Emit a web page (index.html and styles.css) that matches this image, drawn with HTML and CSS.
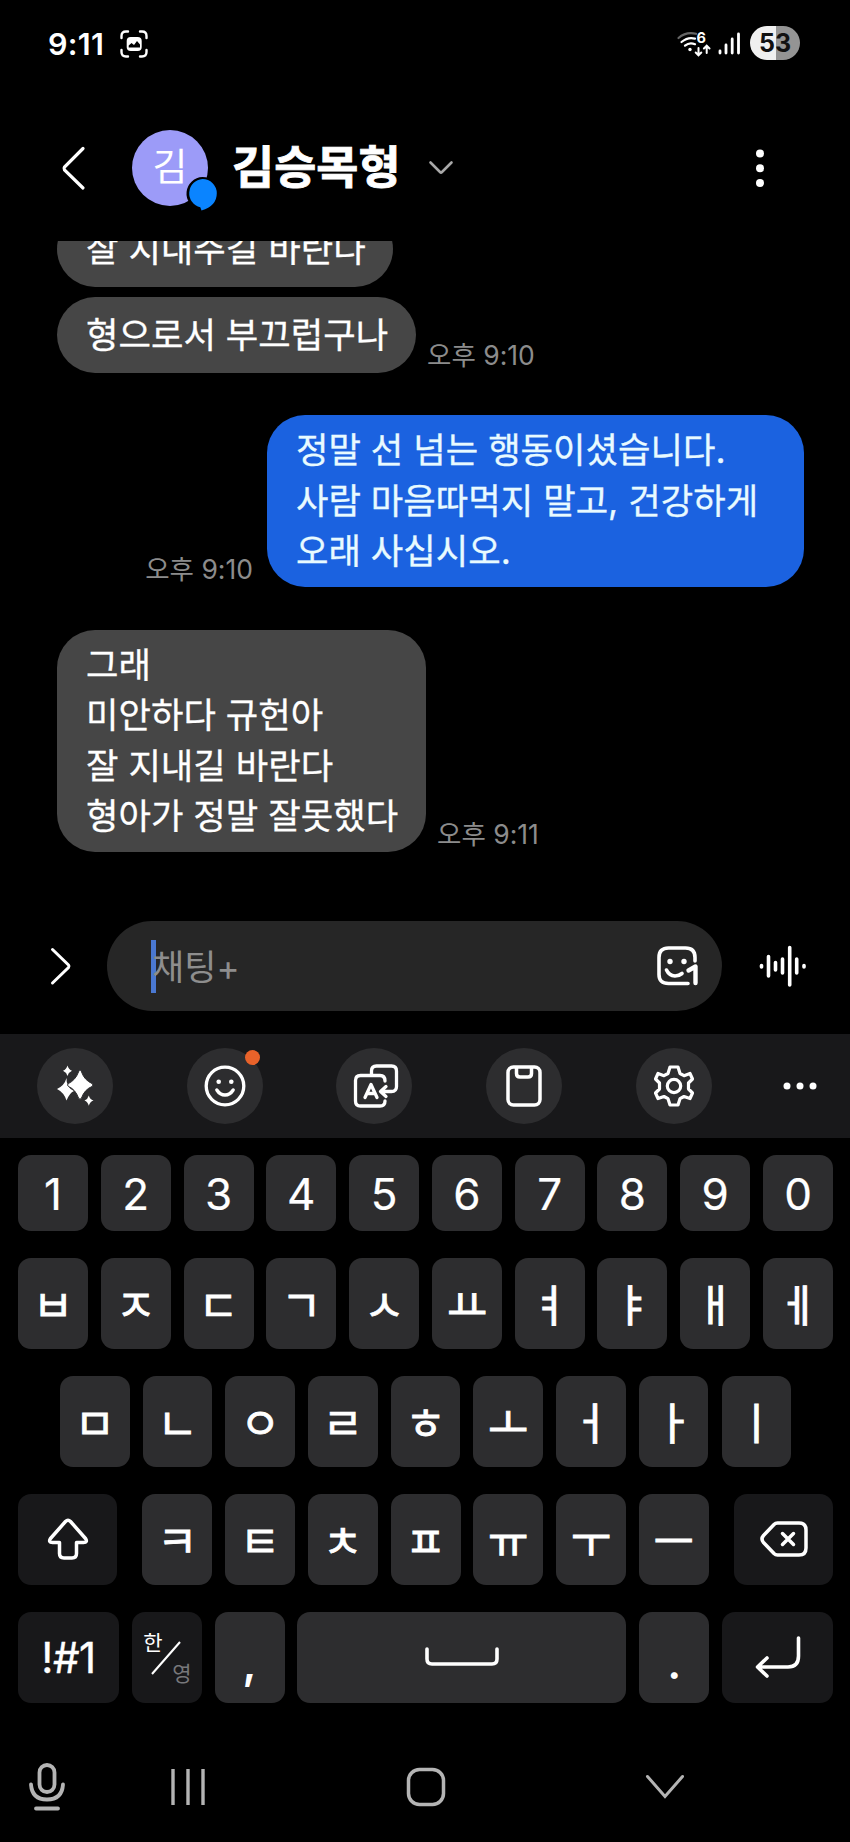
FILE: index.html
```html
<!DOCTYPE html>
<html lang="ko">
<head>
<meta charset="utf-8">
<title>김승목형</title>
<link rel="stylesheet" href="styles.css">
</head>
<body>
<div class="phone">
  <header class="status">
    <span class="clock">9:11</span>
    <svg class="shot" width="28" height="28" viewBox="0 0 28 28"><path d="M1.5 8V6Q1.500 1.500 6 1.500H8M20 1.500H22Q26.500 1.500 26.500 6V8M26.500 20V22Q26.500 26.500 22 26.500H20M8 26.500H6Q1.500 26.500 1.500 22V20" fill="none" stroke="#fff" stroke-width="2.4" stroke-linecap="round"/><rect x="6.700" y="7" width="15" height="14" rx="4" fill="#fff"/><path d="M8.700 17.500V15.500L11.500 13 14 15 17 11 20 14.500V17.500Z" fill="#000"/></svg>
    <svg class="wifi" width="35" height="27" viewBox="0 0 35 27" fill="none" stroke="#fff" stroke-linecap="round" stroke-width="2.200"><path d="M1.500 7Q9 .5 19 2.800" stroke="#666"/><path d="M4.500 11Q11 5.500 18 7.600M8 14.700Q12.500 10.800 18 13.200"/><circle cx="13" cy="18.500" r="1.700" fill="#fff" stroke="none"/><path d="M21.500 17V24M18.700 21.500L21.500 24.300 24.300 21.500M29.700 22V15M26.900 17.500L29.700 14.700 32.500 17.500" stroke-width="2"/><text class="wifi-gen" x="19.500" y="11.500">6</text></svg>
    <svg class="signal" width="23" height="24" viewBox="0 0 23 24" stroke="#fff" stroke-width="2.800" stroke-linecap="round"><path d="M2 19V21M8 13V21M14.200 7V21M20.500 2V21"/></svg>
    <span class="battery">53</span>
  </header>

  <div class="titlebar">
    <svg class="back" width="26" height="48" viewBox="0 0 26 48"><path d="M23 4.500L4.500 23Q3.500 24.500 4.500 26L23 44" fill="none" stroke="#fff" stroke-width="3.200" stroke-linecap="round"/></svg>
    <div class="avatar">김
      <svg class="badge" width="36" height="40" viewBox="0 0 36 40"><path d="M17.500 1A16.500 16.500 0 0 0 14 33.500L17 36Q34 34 34 17.500A16.500 16.500 0 0 0 17.500 1Z" fill="#000"/><path d="M17.500 3A14.300 14.300 0 0 0 15.300 31.200L16.500 34.500Q31.800 30 31.800 17.300A14.300 14.300 0 0 0 17.500 3Z" fill="#0a84ff"/></svg>
    </div>
    <h1 class="name">김승목형</h1>
    <svg class="more-name" width="26" height="16" viewBox="0 0 26 16"><path d="M2.500 2.500L12 12Q13 13 14 12L23.500 2.500" fill="none" stroke="#a8a8a8" stroke-width="2.600" stroke-linecap="round"/></svg>
    <svg class="kebab" width="10" height="40" viewBox="0 0 10 40" fill="#fff"><circle cx="5" cy="5.500" r="4"/><circle cx="5" cy="20.200" r="4"/><circle cx="5" cy="35" r="4"/></svg>
  </div>

  <main class="chat">
    <div class="msg first"><p class="bubble b1">잘 지내주길 바란다</p></div>
    <div class="msg second"><p class="bubble b2">형으로서 부끄럽구나</p><time class="time">오후 9:10</time></div>
    <div class="msg mine"><time class="time">오후 9:10</time><p class="bubble blue">정말 선 넘는 행동이셨습니다.<br>사람 마음따먹지 말고, 건강하게<br>오래 사십시오.</p></div>
    <div class="msg last"><p class="bubble b4">그래<br>미안하다 규헌아<br>잘 지내길 바란다<br>형아가 정말 잘못했다</p><time class="time">오후 9:11</time></div>
  </main>

  <div class="compose">
    <svg class="expand" width="24" height="40" viewBox="0 0 24 40"><path d="M3.500 3.500L19.500 19Q20.500 20.200 19.500 21.500L3.500 37" fill="none" stroke="#fff" stroke-width="3" stroke-linecap="round"/></svg>
    <div class="field"><i class="caret"></i><span class="hint">채팅+</span>
      <svg class="sticker" width="42" height="41" viewBox="0 0 42 41" fill="none" stroke="#fff" stroke-width="3.600" stroke-linecap="round" stroke-linejoin="round"><path d="M31 37.500H11.500Q2 37.500 2 28.500V11.500Q2 2 11.500 2H28.500Q38 2 38 11.500V15M9.500 24Q12 29.500 18 30 22 30 25 27.500"/><path d="M31.500 24.500L38.500 20.500V37" stroke-width="4.400"/><circle cx="13" cy="15.500" r="2.700" fill="#fff" stroke="none"/><circle cx="27" cy="15.500" r="2.700" fill="#fff" stroke="none"/></svg>
    </div>
    <svg class="wave" width="48" height="44" viewBox="0 0 48 44" stroke="#fff" stroke-width="3.600" stroke-linecap="round"><path d="M2.500 21.500V23M9.500 12.500V32M16.500 18.500V26M23.500 15V29M30.700 3.500V41M37.700 15V29M45 21.500V23"/></svg>
  </div>

  <section class="keyboard">
    <div class="tools">
      <button class="tool"><svg width="40" height="42" viewBox="0 0 40 42" fill="#fff"><path d="M11.500 13Q9.500 20.500 2 24Q9 27.500 11.500 35.500Q14.500 28 19 26Q11 22.500 11.500 13Z"/><path d="M25 5Q26 4.500 27 8Q29.500 15 37 18.500Q39 20 37 21.500Q29.500 24.500 26.500 33Q25 35.500 23.500 33Q20.500 24.500 13.500 21.500Q11.500 20 13.500 18.500Q20.500 15 23.500 7Q24 5 25 5Z" stroke="#2d2d2f" stroke-width="1"/><path d="M12.500 0.500Q13.500 4.500 17 5.800 13.500 7.300 12.500 11 11.400 7.300 8 5.800 11.400 4.500 12.500 .5ZM33.800 30.500Q34.800 34.300 38.500 35.500 34.800 36.800 33.800 40.800 32.800 36.800 29.500 35.500 32.800 34.300 33.800 30.500Z"/></svg></button>
      <button class="tool"><svg width="42" height="42" viewBox="0 0 42 42" fill="none" stroke="#fff" stroke-width="3.300" stroke-linecap="round"><circle cx="21" cy="21" r="18.800"/><path d="M12.800 25Q16 30 21 30T29.200 25"/><circle cx="14.700" cy="16.700" r="2.300" fill="#fff" stroke="none"/><circle cx="27.300" cy="16.700" r="2.300" fill="#fff" stroke="none"/></svg><i class="dot"></i></button>
      <button class="tool shift-right"><svg width="46" height="44" viewBox="0 0 46 44" fill="none" stroke="#fff" stroke-width="3.300" stroke-linecap="round" stroke-linejoin="round"><path d="M18.500 10V7Q18.500 2 23.500 2H38.500Q43.500 2 43.500 7V22.500Q43.500 27.500 38.500 27.500H29M33 22.500L27.500 27.500 33 32.500M32 17Q32 11.500 27 11.500H7.500Q2.500 11.500 2.500 16.500V37Q2.500 42 7.500 42H27Q32 42 32 37"/><path d="M12 33.500L18 20.500 24 33.500M14.200 29.500H21.800"/></svg></button>
      <button class="tool"><svg width="36" height="42" viewBox="0 0 36 42" fill="none" stroke="#fff" stroke-width="3.500" stroke-linejoin="round"><rect x="2" y="2" width="32" height="38" rx="5.500"/><path d="M10.500 2V8.500Q10.500 12 14 12H22Q25.500 12 25.500 8.500V2"/></svg></button>
      <button class="tool"><svg width="40" height="42" viewBox="0 0 40 42" fill="none" stroke="#fff" stroke-width="3.200" stroke-linejoin="round"><path d="M16 2H24L26 8.500 30 10.700 36 8.500 38.500 14 34.500 18V24L38.500 28 36 33.500 30 31.500 26 33.700 24 40H16L14 33.700 10 31.500 4 33.500 1.500 28 5.500 24V18L1.500 14 4 8.500 10 10.700 14 8.500Z"/><circle cx="20" cy="21" r="6.700"/></svg></button>
      <svg class="dots" width="34" height="10" viewBox="0 0 34 10" fill="#fff"><circle cx="4" cy="5" r="3.500"/><circle cx="17" cy="5" r="3.500"/><circle cx="30" cy="5" r="3.500"/></svg>
    </div>
    <div class="rows">
      <div class="row nums"><b class="key">1</b><b class="key">2</b><b class="key">3</b><b class="key">4</b><b class="key">5</b><b class="key">6</b><b class="key">7</b><b class="key">8</b><b class="key">9</b><b class="key">0</b></div>
      <div class="row"><b class="key">ㅂ</b><b class="key">ㅈ</b><b class="key">ㄷ</b><b class="key">ㄱ</b><b class="key">ㅅ</b><b class="key">ㅛ</b><b class="key">ㅕ</b><b class="key">ㅑ</b><b class="key">ㅐ</b><b class="key">ㅔ</b></div>
      <div class="row inset"><b class="key">ㅁ</b><b class="key">ㄴ</b><b class="key">ㅇ</b><b class="key">ㄹ</b><b class="key">ㅎ</b><b class="key">ㅗ</b><b class="key">ㅓ</b><b class="key">ㅏ</b><b class="key">ㅣ</b></div>
      <div class="row third">
        <b class="key dark side"><svg width="42" height="42" viewBox="0 0 42 42" fill="none" stroke="#fff" stroke-width="3.500" stroke-linejoin="round"><path d="M18.500 3.500Q21 1 23.500 3.500L38.500 20.500Q41 24.500 36.500 24.500H29.500V35.500Q29.500 40 25 40H17Q12.500 40 12.500 35.500V24.500H5.500Q1 24.500 3.500 20.500Z"/></svg></b>
        <b class="key">ㅋ</b><b class="key">ㅌ</b><b class="key">ㅊ</b><b class="key">ㅍ</b><b class="key">ㅠ</b><b class="key">ㅜ</b><b class="key">ㅡ</b>
        <b class="key dark side end"><svg width="48" height="36" viewBox="0 0 48 36" fill="none" stroke="#fff" stroke-width="3.500" stroke-linecap="round" stroke-linejoin="round"><path d="M17.500 2H39Q46 2 46 9V27Q46 34 39 34H17.500Q15.500 34 14 32.500L3.500 21.500Q.5 18 3.500 14.500L14 3.500Q15.500 2 17.500 2Z"/><path d="M22.500 12.500L33.500 23.500M33.500 12.500L22.500 23.500"/></svg></b>
      </div>
      <div class="row bottom">
        <b class="key dark sym">!#1</b>
        <b class="key dark lang"><span class="ko">한</span><svg width="30" height="34" viewBox="0 0 30 34"><path d="M1 33L29 1" stroke="#fff" stroke-width="2"/></svg><span class="en">영</span></b>
        <b class="key punct">,</b>
        <b class="key space"><svg width="74" height="20" viewBox="0 0 74 20"><path d="M2 2V12Q2 17 7 17H67Q72 17 72 12V2" fill="none" stroke="#fff" stroke-width="3.600" stroke-linecap="round"/></svg></b>
        <b class="key punct">.</b>
        <b class="key dark enter"><svg width="46" height="42" viewBox="0 0 46 42" fill="none" stroke="#fff" stroke-width="3.600" stroke-linecap="round" stroke-linejoin="round"><path d="M43.500 2V20Q43.500 31 33 31H3M12 22L2.500 31 12 40"/></svg></b>
      </div>
    </div>
    <nav class="nav">
      <svg width="38" height="50" viewBox="0 0 38 50" fill="none" stroke="#b4b4b4" stroke-width="3.800" stroke-linecap="round"><rect x="11.500" y="3" width="15" height="27" rx="7.500"/><path d="M3 22.500Q4 37.500 19 37.500T35 22.500M8 46.500H30"/></svg>
      <svg class="recent" width="36" height="38" viewBox="0 0 36 38" stroke="#b4b4b4" stroke-width="3.400"><path d="M3 1V37M18 1V37M33 1V37"/></svg>
      <svg class="home" width="40" height="40" viewBox="0 0 40 40"><rect x="2.500" y="2.500" width="35" height="35" rx="11" fill="none" stroke="#b4b4b4" stroke-width="3.500"/></svg>
      <svg class="hide" width="40" height="26" viewBox="0 0 40 26"><path d="M2.500 2.500L20 22.500 37.500 2.500" fill="none" stroke="#b4b4b4" stroke-width="3" stroke-linecap="round"/></svg>
    </nav>
  </section>
</div>
</body>
</html>
```
FILE: styles.css
```css
* { box-sizing: border-box; }
body { margin: 0; background: #000; color: #fff; font-family: Inter, "Noto Sans CJK KR", sans-serif; }
.phone { width: 850px; height: 1842px; display: flex; flex-direction: column; overflow: hidden; }
svg { display: block; flex: none; }
h1, p { margin: 0; }

.status { display: flex; align-items: center; height: 88px; padding: 0 50px 0 48px; flex: none; }
.clock { font-size: 30.500px; font-weight: 600; width: 72px; letter-spacing: 0.3px; line-height: 36px; padding-bottom: 1px; }
.wifi { margin-left: auto; }
.wifi-gen { font-size: 14.500px; font-weight: 700; fill: #fff; stroke: none; }
.signal { margin-left: 6px; }
.battery { margin: 0 0 2px 9px; width: 50px; height: 34px; border-radius: 17px; background: linear-gradient(90deg, #f0f0f0 52%, #949494 52%); color: #111; font-size: 25px; font-weight: 700; line-height: 34px; text-align: center; }

.titlebar { display: flex; align-items: center; height: 153px; padding: 7px 85px 0 60px; flex: none; }
.avatar { position: relative; margin-left: 46px; width: 76px; height: 76px; border-radius: 50%; background: #9c9bf8; font-size: 38px; line-height: 73px; text-align: center; }
.badge { position: absolute; left: 53px; top: 46px; }
.name { margin-left: 24px; width: 168px; font-size: 45.800px; line-height: 60px; font-weight: 700; white-space: nowrap; -webkit-text-stroke: 0.8px #fff; }
.more-name { margin-left: 28px; }
.kebab { margin-left: auto; }

.chat { height: 647px; overflow: hidden; flex: none; padding-left: 57px; }
.msg { display: flex; align-items: flex-end; }
.bubble { padding: 11px 0 9px 29px; border-radius: 38px; background: #464646; font-size: 35.300px; line-height: 50.5px; white-space: nowrap; -webkit-text-stroke: 0.3px currentColor; }
.b1 { width: 336px; height: 76px; padding-top: 14px; }
.b2 { width: 359px; height: 76px; padding-top: 14px; }
.b4 { width: 369px; }
.blue { width: 537px; background: #1b62e0; color: #e8faff; }
.first { margin-top: -30px; }
.second { margin-top: 10px; }
.mine { margin-top: 42px; justify-content: flex-end; padding-right: 46px; }
.last { margin-top: 43px; }
.time { margin: 0 11px -1px; font-size: 26.500px; line-height: 38px; color: #8c8c8c; white-space: nowrap; }
.mine .time { margin-right: 14px; }

.compose { display: flex; align-items: center; height: 146px; padding: 14px 43px 4px 49px; flex: none; }
.field { margin-left: 34px; width: 615px; height: 90px; border-radius: 45px; background: #262626; display: flex; align-items: center; padding: 0 23px 0 44px; }
.caret { width: 5px; height: 53px; background: #4a78d2; }
.hint { margin-left: -4px; padding-bottom: 4px; font-size: 35px; color: #8e8e8e; }
.sticker { margin-left: auto; }
.wave { margin-left: 37px; }

.tools { display: flex; align-items: center; height: 104px; padding-left: 37px; background: #18181a; }
.tool { position: relative; width: 76px; height: 76px; margin-right: 73.700px; padding: 0; border: 0; border-radius: 50%; background: #2d2d2f; display: grid; place-items: center; flex: none; }
.shift-right { padding-left: 4px; }
.dot { position: absolute; left: 58px; top: 2px; width: 15px; height: 15px; border-radius: 50%; background: #e8622a; }
.dots { margin-left: -2px; }

.rows { padding: 17px 17px 0 18px; display: flex; flex-direction: column; gap: 27px; }
.row { display: flex; gap: 12.800px; height: 91px; }
.nums { height: 76px; }
.inset { padding: 0 42px; gap: 13.200px; }
.key { flex: 1 1 0; min-width: 0; border-radius: 13px; background: #2d2d2f; display: flex; align-items: center; justify-content: center; font-size: 44px; font-weight: 400; padding-bottom: 2px; overflow: hidden; -webkit-text-stroke: 0.8px #fff; }
.nums .key { font-size: 44px; padding: 2px 0 0; -webkit-text-stroke: 0.2px #fff; }
.dark { background: #18181a; }
.side { flex: 0 0 99px; margin-right: 12.500px; }
.side.end { margin: 0 0 0 12.500px; }
.sym { flex: 0 0 101px; font-size: 42px; letter-spacing: -0.5px; padding-bottom: 0; -webkit-text-stroke: 0.4px #fff; }
.lang { flex: 0 0 70px; display: grid; grid-template-columns: 29px 18px; align-content: center; justify-content: center; padding: 1px 0 0; -webkit-text-stroke: 0; }
.lang svg { grid-area: 2 / 1; margin: -13px 0 -12px 8px; }
.ko, .en { font-size: 21px; line-height: 22px; }
.ko { grid-area: 1 / 1; }
.en { grid-area: 3 / 2; color: #77777a; }
.punct { flex: 0 0 70px; align-items: flex-end; padding-bottom: 13px; font-weight: 600; -webkit-text-stroke: 0; }
.space { flex: 1; }
.enter { flex: 0 0 111px; }

.nav { display: flex; align-items: center; height: 136px; padding: 32px 0 0 28px; }
.nav .recent { margin-left: 104px; }
.nav .home { margin-left: 200px; }
.nav .hide { margin-left: 199px; }
```
